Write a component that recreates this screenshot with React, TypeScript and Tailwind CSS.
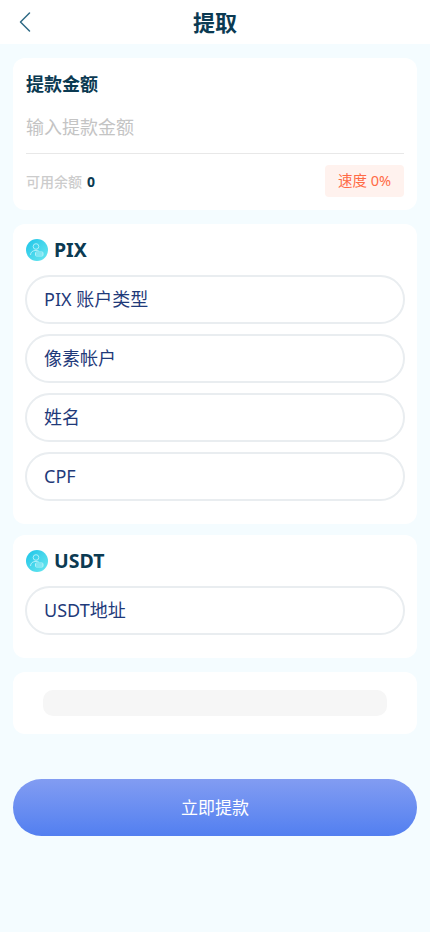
import { ChevronLeft } from 'lucide-react'

const FONT = "font-['Noto_Sans','Noto_Sans_CJK_SC',sans-serif]"

function PersonBadge() {
  return (
    <div className="ml-px flex h-[22px] w-[22px] items-center justify-center rounded-full bg-gradient-to-br from-[#10c4e8] to-[#66e8ef]">
      <svg width="16" height="16" viewBox="0 0 16 16" fill="none" stroke="#c9f5fb" strokeWidth="0.8">
        <circle cx="7" cy="4.5" r="2.8" />
        <path d="M1.5 13c0-3 2.4-4.6 5.5-4.6 1 0 1.9.2 2.7.5" />
        <rect x="6.5" y="10" width="7.5" height="4" rx="1" />
        <path d="M6.5 12h7.5" />
      </svg>
    </div>
  )
}

function Field({ label }: { label: string }) {
  return (
    <div className="flex h-[49px] items-center rounded-full border-2 border-[#e9edf0] bg-white pl-[17px] text-[18px] text-[#1f3a7a]">
      {label}
    </div>
  )
}

function Section({ title, fields, className }: { title: string; fields: string[]; className: string }) {
  return (
    <section className={`rounded-xl bg-white px-3 ${className}`}>
      <div className="flex h-[22px] items-center gap-[6px]">
        <PersonBadge />
        <h2 className="text-[19.5px] font-bold text-[#0b3a52]">{title}</h2>
      </div>
      <div className="mt-[14px] flex flex-col gap-[10px]">
        {fields.map((field) => (
          <Field key={field} label={field} />
        ))}
      </div>
    </section>
  )
}

export default function App() {
  return (
    <div className={`${FONT} h-[932px] overflow-hidden bg-[#f4fcff]`}>
      <header className="relative flex h-11 items-center justify-center bg-white">
        <ChevronLeft className="absolute left-[7px] top-[4px] text-[#2f6a85]" size={36} strokeWidth={1} />
        <h1 className="text-[22px] font-bold text-[#0b3a52]">提取</h1>
      </header>

      <main className="flex flex-col px-[13px] pt-[14px]">
        <section className="h-[152px] rounded-xl bg-white px-[13px] pt-[13px]">
          <h2 className="text-[18px] leading-[26px] font-bold text-[#0b3a52]">提款金额</h2>
          <div className="mt-[14px] h-[43px] border-b border-[#e8e8e8] pt-[2px] text-[18px] leading-[28px] text-[#c4c4c4]">
            输入提款金额
          </div>
          <div className="mt-[11px] flex items-center justify-between">
            <div className="flex items-center gap-[5px] text-[14px] font-medium text-[#cccccc]">
              可用余额
              <span className="text-[14px] font-bold text-[#0b3a52]">0</span>
            </div>
            <div className="flex h-8 w-[79px] items-center justify-center rounded-[4px] bg-[#fff2ee] text-[14.5px] text-[#ff6a45]">
              速度 0%
            </div>
          </div>
        </section>

        <Section
          title="PIX"
          fields={['PIX 账户类型', '像素帐户', '姓名', 'CPF']}
          className="mt-[14px] h-[300px] pt-[15px]"
        />

        <Section title="USDT" fields={['USDT地址']} className="mt-[11px] h-[123px] pt-[15px]" />

        <section className="mt-[14px] h-[62px] rounded-xl bg-white px-[30px] pt-[18px]">
          <div className="h-[26px] rounded-[10px] bg-[#f6f6f6]" />
        </section>

        <button
          type="button"
          className="mt-[45px] h-[57px] rounded-full bg-gradient-to-b from-[#829cf2] to-[#527ff0] text-[17px] text-white"
        >
          立即提款
        </button>
      </main>
    </div>
  )
}
